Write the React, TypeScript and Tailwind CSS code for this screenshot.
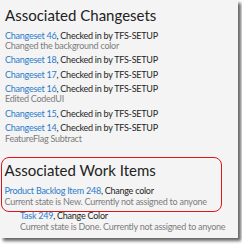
import React from 'react';

type Item = { id: string; title: string; desc?: string };

const changesets: Item[] = [
  { id: 'Changeset 46', title: 'Checked in by TFS-SETUP', desc: 'Changed the background color' },
  { id: 'Changeset 18', title: 'Checked in by TFS-SETUP' },
  { id: 'Changeset 17', title: 'Checked in by TFS-SETUP' },
  { id: 'Changeset 16', title: 'Checked in by TFS-SETUP', desc: 'Edited CodedUI' },
  { id: 'Changeset 15', title: 'Checked in by TFS-SETUP' },
  { id: 'Changeset 14', title: 'Checked in by TFS-SETUP', desc: 'FeatureFlag Subtract' },
];

const Row: React.FC<{ item: Item }> = ({ item }) => (
  <div className="flex flex-col">
    <div className="leading-[10.5px] text-[#1e1e1e] whitespace-nowrap">
      <span className="text-[#2a7bcb]">{item.id}</span>, {item.title}
    </div>
    {item.desc && <div className="leading-[10.5px] text-[#7d7d7d] whitespace-nowrap">{item.desc}</div>}
  </div>
);

export default function App() {
  return (
    <div className="w-[242px] h-[244px] bg-white overflow-hidden">
      <div
        className="w-[238px] h-[238px] bg-[#f4f4f4] shadow-[3px_3px_3px_rgba(0,0,0,0.6)] text-[9px] tracking-[-0.25px] flex flex-col px-[5px] pt-[5px]"
        style={{ fontFamily: 'Lato, "Open Sans", sans-serif' }}
      >
        <h2 className="text-[15px] leading-[20px] tracking-normal text-[#222]">Associated Changesets</h2>
        <div className="flex flex-col gap-[3.8px] mt-[5.6px]">
          {changesets.map(c => <Row key={c.id} item={c} />)}
        </div>

        {/* highlighted work item */}
        <div className="mt-[12.9px] -ml-[4px] w-[221px] border-[1.5px] border-[#e0141c] rounded-[8px] pl-[2.5px] pt-[1.7px] pb-[3.5px]">
          <h2 className="text-[15px] leading-[20px] tracking-normal text-[#222]">Associated Work Items</h2>
          <div className="mt-[6.8px]">
            <div className="leading-[10.5px] text-[#1e1e1e] whitespace-nowrap">
              <span className="text-[#2a7bcb]">Product Backlog Item 248</span>, Change color
            </div>
            <div className="leading-[10.5px] text-[#7d7d7d] whitespace-nowrap">Current state is New. Currently not assigned to anyone</div>
          </div>
        </div>
        <div className="pl-[15px] -mt-[0.7px]">
          <div className="leading-[10.5px] text-[#1e1e1e] whitespace-nowrap">
            <span className="text-[#2a7bcb]">Task 249</span>, Change Color
          </div>
          <div className="leading-[10.5px] text-[#7d7d7d] whitespace-nowrap">Current state is Done. Currently not assigned to anyone</div>
        </div>
      </div>
    </div>
  );
}
